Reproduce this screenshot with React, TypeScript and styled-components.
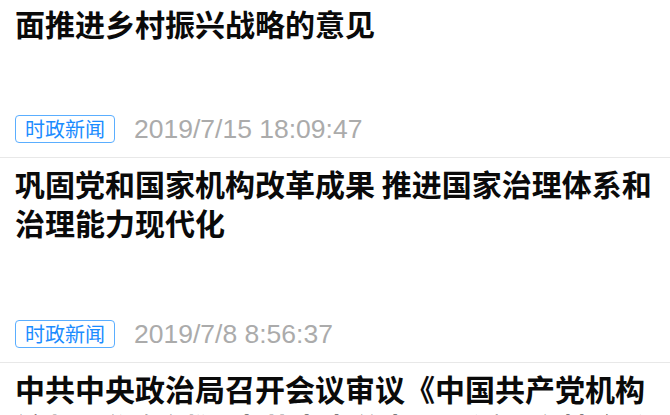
import styled, { createGlobalStyle } from "styled-components";

const GlobalStyle = createGlobalStyle`
  html, body {
    margin: 0;
    padding: 0;
    background: #ffffff;
    overflow: hidden;
  }
  * {
    box-sizing: border-box;
  }
`;

const List = styled.div`
  width: 670px;
  height: 415px;
  overflow: hidden;
  background: #ffffff;
  font-family: "Noto Sans CJK SC", "Noto Sans", sans-serif;
`;

interface IItem {
  $height?: number;
  $padTop?: number;
}

const Item = styled.div<IItem>`
  display: flex;
  flex-direction: column;
  height: ${(props) => props.$height ?? 205}px;
  padding: ${(props) => props.$padTop ?? 6}px 15px 14px;
  border-bottom: 1px solid #e8e8e8;
`;

const Title = styled.div`
  font-size: 30px;
  line-height: 39px;
  font-weight: 700;
  color: #0a0a0a;
`;

const Meta = styled.div`
  display: flex;
  align-items: center;
  margin-top: auto;
  height: 28px;
`;

const Tag = styled.span`
  display: inline-flex;
  align-items: center;
  height: 28px;
  padding: 0 9px;
  border: 1px solid #5aaeff;
  border-radius: 4px;
  color: #1b8cff;
  font-size: 20px;
  line-height: 1;
`;

const Time = styled.span`
  margin-left: 19px;
  font-family: "Liberation Sans", Arial, sans-serif;
  font-size: 26.5px;
  color: #ababab;
`;

interface INews {
  title: string;
  tag: string;
  time: string;
}

const news: INews[] = [
  {
    title: "面推进乡村振兴战略的意见",
    tag: "时政新闻",
    time: "2019/7/15 18:09:47",
  },
  {
    title: "巩固党和国家机构改革成果 推进国家治理体系和治理能力现代化",
    tag: "时政新闻",
    time: "2019/7/8 8:56:37",
  },
  {
    title: "中共中央政治局召开会议审议《中国共产党机构编制工作条例》 中共中央总书记习近平主持会议",
    tag: "时政新闻",
    time: "2019/7/1 9:12:05",
  },
];

const App = () => {
  return (
    <>
      <GlobalStyle />
      <List>
        {news.map((n, i) => (
          <Item
            key={i}
            $height={i === 0 ? 158 : undefined}
            $padTop={i === 0 ? 4 : undefined}
          >
            <Title>{n.title}</Title>
            <Meta>
              <Tag>{n.tag}</Tag>
              <Time>{n.time}</Time>
            </Meta>
          </Item>
        ))}
      </List>
    </>
  );
};

export default App;
